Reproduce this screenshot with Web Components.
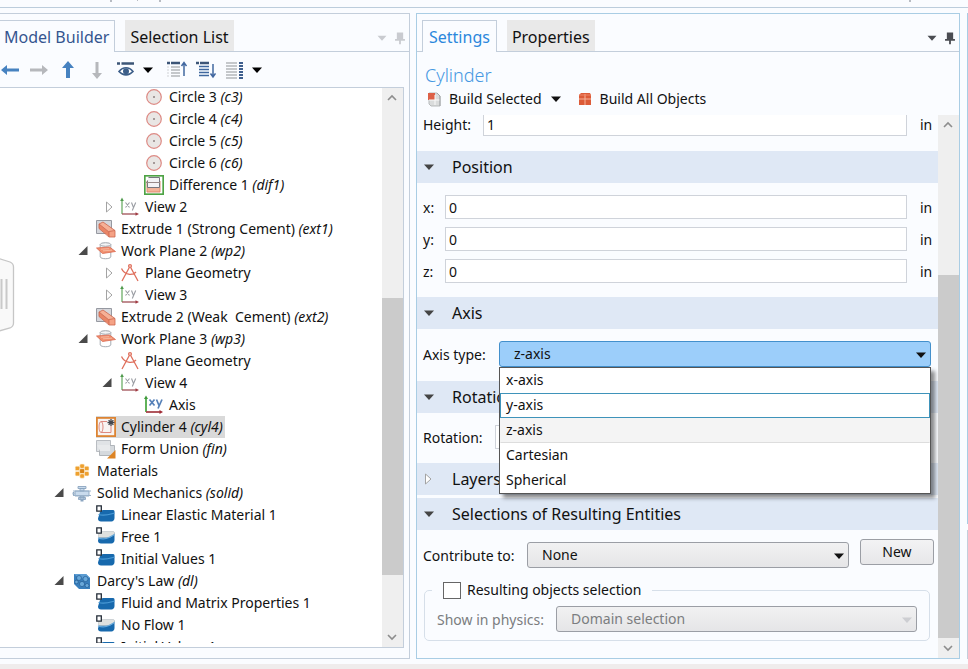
<!DOCTYPE html>
<html lang="en">
<head>
<meta charset="utf-8">
<title>Model Builder</title>
<style>
    html, body {
        height: 100%;
        margin: 0;
    }
    body {
        overflow: hidden;
        background: #fafcff;
        color: #111;
        font: 14px/22px "Noto Sans", "Open Sans", sans-serif;
    }
</style>
</head>
<body>
<model-app></model-app>

<script>
const ICONS = {
    "circle": `<circle cx="10" cy="10" r="7.3" fill="#e9e6e4" stroke="#dd8a84" stroke-width="1.2"/><circle cx="10" cy="10" r="1" fill="#8c8080"/>`,
    "difference": `<rect x=".8" y=".8" width="18.4" height="18.4" fill="#fff" stroke="#4ea345" stroke-width="1.7"/><path d="M3 7h13v10H3z" fill="#f3b49a"/><path d="M3 6h13v11H3z" fill="none" stroke="#e08a70"/><path d="M4.500 2.500h11v10H3.500v-7" fill="#f4f3f6" stroke="#77777f"/><path d="M2 7.500h14" stroke="#998a8a"/>`,
    "view": `<path d="M2 17V3" stroke="#6cae68" stroke-width="1.300"/><path d="M2 .5L3.800 4H.2z" fill="#4f9a4c"/><path d="M2 17h14" stroke="#a04f55" stroke-width="1.300"/><path d="M19 17l-3.500-1.800v3.600z" fill="#a03a42"/><path d="M5.500 5.500l4 5M9.500 5.500l-4 5M11.500 5.500l2 5M15.700 5.500l-3.400 8" stroke="#9a9da3" fill="none" stroke-width="1.100"/>`,
    "axis": `<path d="M2 17V3" stroke="#4faa48" stroke-width="1.800"/><path d="M2 .5L4 4H0z" fill="#3f9a3c"/><path d="M2 17h14" stroke="#a8434b" stroke-width="1.800"/><path d="M19 17l-3.500-2v4z" fill="#a02a35"/><path d="M5.500 4.500l5 6M10.500 4.500l-5 6M12.500 4.500l2.500 6M18 4.500l-4 9" stroke="#5681b8" fill="none" stroke-width="1.700"/>`,
    "extrude": `<path d="M.5 1.500h15v13H.5z" fill="#d5d6db" stroke="#9699a1"/><path d="M3 5l4-2 12 8.500-6 1.500z" fill="#f6b096"/><path d="M3 5l10 8v4.500L3 9.500z" fill="#e98566"/><path d="M13 12h6v6h-6z" fill="#f5a285"/><path d="M3 5l4-2 12 8.500V18h-6L3 9.500zM3 5l10 8v5M13 12.500l6-1" fill="none" stroke="#cc654d" stroke-width=".8"/>`,
    "plane": `<ellipse cx="9.500" cy="3.500" rx="5.300" ry="1.800" fill="#f3f4f6" stroke="#9fa5ac"/><path d="M4.200 3.500v12.500M14.800 3.500v12.500M4.200 16c1 2.300 9.600 2.300 10.600 0" fill="none" stroke="#a5abb2"/><path d="M.5 7l13-1 6 4.500-13 2z" fill="#f0906f" stroke="#d96850" stroke-width=".8"/><path d="M5 8.200l8-.5M7 9.800l9-.6" stroke="#f9c7b2" stroke-width=".7"/>`,
    "compass": `<g fill="none" stroke="#df6f5c" stroke-width="1.300"><circle cx="10" cy="3" r="1.400"/><path d="M9.300 4.500L2 18M10.700 4.500L18 18M1.500 5.500c3 6.500 11 7.500 14.500 3.500"/></g>`,
    "cylinder": `<rect x=".9" y=".9" width="18.200" height="18.200" fill="#f8f4f2" stroke="#dc8433" stroke-width="1.800"/><g fill="none" stroke="#dd8a80" stroke-width="1"><ellipse cx="5" cy="10" rx="2" ry="5.500"/><path d="M5 4.500h6M5 15.500h10V9"/></g><path d="M15 2v7M11.500 5.500h7M12.600 3.100l4.800 4.800M17.400 3.100l-4.800 4.800" stroke="#43464d" stroke-width="1.300"/>`,
    "union": `<path d="M.5 1.500h14v11H.5z" fill="#e0e3e6" stroke="#b9bdc2"/><path d="M3.500 6.500h15v10h-15z" fill="#d5d9dd" stroke="#b0b5ba"/><path d="M1 6h13v6H4z" fill="#e8eaec"/><path d="M19.500 11v8.500H11z" fill="#dd8424"/>`,
    "materials": `<g fill="#eea02e" stroke="#fdf3df" stroke-width=".6"><rect x="7.800" y="3" width="4.600" height="4.400" rx="1.200"/><rect x="7.800" y="12.800" width="4.600" height="4.400" rx="1.200"/><rect x="3.200" y="5.200" width="4.600" height="4.400" rx="1.200"/><rect x="12.400" y="5.200" width="4.600" height="4.400" rx="1.200"/><rect x="3.200" y="10.500" width="4.600" height="4.400" rx="1.200"/><rect x="12.400" y="10.500" width="4.600" height="4.400" rx="1.200"/><rect x="7.600" y="7.700" width="5" height="4.800" rx="1.200" fill="#d98517"/></g>`,
    "solid": `<g fill="#c9dbed" stroke="#8ba5c0" stroke-width=".9"><path d="M6 3.500h8v2H6zM8 5.500h4v2.500H8zM3 8h14v5H3zM2 9.500H1v2h1zM8 13h4v3H8zM6.500 14.500h7v2h-7z"/></g><path d="M1 8h18M1 12.500h18" stroke="#9bb3cb"/><path d="M8.500 17h3v1.500h-3z" fill="#8ba5c0"/>`,
    "darcy": `<path d="M2 3h12l4 4v11H7l-5-5z" fill="#397fbd"/><path d="M2 3h12l4 4-11 .5z" fill="#5d9dd2"/><g fill="#69a8d9" stroke="#235c93" stroke-width=".7"><circle cx="7" cy="7" r="2.500"/><circle cx="13.500" cy="8" r="2.600"/><circle cx="10" cy="13" r="2.600"/><circle cx="15" cy="14.500" r="2"/><circle cx="4.500" cy="11" r="1.800"/></g>`,
    "domain": `<path d="M4 7c1-2 3-2 5-2h8c1.500 0 1.500 1 1.500 2v6c0 2-1.500 3.500-3 3.500H5c-2 0-3-1-3-3z" fill="#1769ad"/><path d="M2.500 9.500c6 2 11 0 16-1.500" fill="none" stroke="#4b9bd6" stroke-width="1.200"/><path d="M.8.8h4.500v5.400H.8z" fill="#fff" stroke="#222b36" stroke-width="1.300"/>`,
    "boundary": `<path d="M4 7c1-2 3-2 5-2h8c1.500 0 1.500 1 1.500 2v6c0 2-1.500 3.500-3 3.500H5c-2 0-3-1-3-3z" fill="#1769ad"/><path d="M2.500 7c1-2 3-2.500 5-2.500h9.500c1.500 0 1.500 1 1.500 2.500-2 2-4 3.500-6.500 3.500H2.500z" fill="#dfe1df" stroke="#b7bfc4" stroke-width=".6"/><path d="M2 11c5 1.500 8 1 11-.5l5.500-3" fill="none" stroke="#63a8dc" stroke-width="1.200"/><path d="M.8.8h4.500v5.400H.8z" fill="#fff" stroke="#222b36" stroke-width="1.300"/>`,
    "left": `<path d="M1 10l6-5v3.600h12v2.800H7V15z" fill="#4682c0"/>`,
    "right": `<path d="M19 10l-6-5v3.600H1v2.800h12V15z" fill="#b6b8bc"/>`,
    "up": `<path d="M10 1l6 7h-4v10H8V8H4z" fill="#4682c0"/>`,
    "down": `<path d="M10 19l5-6h-3.500V2h-3v11H5z" fill="#b6b8bc"/>`,
    "show": `<path d="M1 3.500h3M5.500 3.500H18" stroke="#3c5577" stroke-width="2.400"/><path d="M3 11.500c4-5 10-5 14 0-4 4.500-10 4.500-14 0z" fill="#fff" stroke="#3c5e89" stroke-width="1.600"/><circle cx="10" cy="11.200" r="3" fill="#3c5e89"/>`,
    "collapse": `<path d="M0 3h3M4 3h9" stroke="#3c5577" stroke-width="2.400"/><path d="M4 7h9M4 10h9M4 13h9M4 16h9" stroke="#b4b7bb" stroke-width="1.400"/><path d="M0 7h2M0 10h2M0 13h2M0 16h2" stroke="#d0d2d5"/><path d="M17 16V3M14.500 6L17 2.500 19.500 6" fill="none" stroke="#4268a0" stroke-width="1.500"/>`,
    "expand": `<path d="M0 3h3M4 3h9" stroke="#3c5577" stroke-width="2.400"/><path d="M3 6.500h10M3 9.500h10M3 12.500h10M3 15.500h10" stroke="#3f679e" stroke-width="1.600"/><path d="M17 4v13M14.500 13.500L17 17l2.500-3.500" fill="none" stroke="#4268a0" stroke-width="1.500"/>`,
    "columns": `<path d="M1 3h11M1 6h11M1 9h11M1 12h11M1 15h11M1 18h11" stroke="#b4b7bb" stroke-width="1.400"/><path d="M14 3h4M14 6h4M14 9h4M14 12h4M14 15h4M14 18h4" stroke="#3f5f8e" stroke-width="1.900"/>`,
    "build": `<path d="M5 4h8l3 3v10H7l-2-2z" fill="#dadcdc" stroke="#b7babb"/><path d="M4 4h7v7H4z" fill="#dd6047"/><path d="M11 6v10M5 11h11" stroke="#fafafa"/><path d="M13 4l3 3v10" fill="none" stroke="#a2a5a8"/>`,
    "build-all": `<path d="M4 6l2-2h9l1 2v10H4z" fill="#dc5b38"/><path d="M10 5v11M4 10h12" stroke="#f6b39a"/><path d="M4 6h12" stroke="#ee8769"/>`,
    "menu": `<path d="M5 7.500h10l-5 5.500z" fill="currentColor"/>`,
    "pin": `<path d="M6.500 4h7v7h2v2h-4.500v4h-2v-4H4.500v-2h2z" fill="currentColor"/>`,
    "open": `<path d="M11.500 5v9H2.500z" fill="#4a4a4a"/>`,
    "closed": `<path d="M6.500 5l5.500 5-5.500 5z" fill="#fff" stroke="#a3a3a3"/>`,
    "chevron-up": `<path d="M6 12l4-4 4 4" fill="none" stroke="#8d8d8d" stroke-width="1.600"/>`,
    "chevron-down": `<path d="M6 8l4 4 4-4" fill="none" stroke="#8d8d8d" stroke-width="1.600"/>`
};

class UiIcon extends HTMLElement {

    constructor() {
        super();
        this.attachShadow({ mode: "open" });
    }

    connectedCallback() {
        this.shadowRoot.innerHTML = `
        <style>
            :host {
                display: block;
                flex: none;
                width: 20px;
                height: 20px;
                white-space: normal;
            }
            svg {
                display: block;
                width: 100%;
                height: 100%;
            }
        </style>
        <svg viewBox="0 0 20 20" aria-hidden="true">${ICONS[this.getAttribute("name")] || ""}</svg>
      `;
    }
}

class ScrollRail extends HTMLElement {

    constructor() {
        super();
        this.attachShadow({ mode: "open" });
    }

    connectedCallback() {
        // before / size / after are the proportions of the track
        const before = this.getAttribute("before");
        const size = this.getAttribute("size");
        const after = this.getAttribute("after");
        this.shadowRoot.innerHTML = `
        <style>
            :host {
                display: flex;
                flex-direction: column;
                flex: none;
                width: 21px;
                background: #efefef;
            }
            button {
                padding: 0;
                border: 0;
                background: none;
                height: 20px;
            }
            .thumb {
                background: #cbcbcb;
            }
        </style>
        <button aria-label="Scroll up"><ui-icon name="chevron-up"></ui-icon></button>
        <div style="flex: ${before}"></div>
        <div class="thumb" style="flex: ${size}"></div>
        <div style="flex: ${after}"></div>
        <button aria-label="Scroll down"><ui-icon name="chevron-down"></ui-icon></button>
      `;
    }
}

class PanelTabs extends HTMLElement {

    constructor() {
        super();
        this.attachShadow({ mode: "open" });
    }

    connectedCallback() {
        const [first, second] = this.getAttribute("tabs").split("|");
        this.shadowRoot.innerHTML = `
        <style>
            :host {
                display: flex;
                flex: none;
                height: 31px;
                padding: 6px 0 0 5px;
                border-bottom: 1px solid #c3cedb;
            }
            :host([flush]) {
                padding-left: 0;
            }
            button {
                font: inherit;
                font-size: 16px;
                line-height: 24px;
                border: 0;
                padding: 2px 5px 0;
                height: 31px;
                color: #111;
                background: #e9e9e9;
            }
            .active {
                height: 32px;
                padding: 1px 6px 0;
                margin-right: 10px;
                border: 1px solid #c3cedb;
                border-bottom: 0;
                background: #fafcff;
                color: var(--tab-color);
            }
            :host([flush]) .active {
                border-left: 0;
                padding: 1px 5px 0 4px;
            }
            .tools {
                display: flex;
                margin-left: auto;
                padding-top: 5px;
                align-items: center;
                color: var(--tool-color);
            }
            .tools button {
                display: block;
                background: none;
                color: inherit;
                padding: 0;
                height: 20px;
                width: 18px;
            }
            ui-icon {
                width: 18px;
                height: 18px;
            }
        </style>
        <button class="active">${first}</button>
        <button>${second}</button>
        <div class="tools">
            <button aria-label="Panel menu"><ui-icon name="menu"></ui-icon></button>
            <button aria-label="Pin panel"><ui-icon name="pin"></ui-icon></button>
        </div>
      `;
    }
}

class TreeNode extends HTMLElement {

    constructor() {
        super();
        this.attachShadow({ mode: "open" });
    }

    connectedCallback() {
        const level = Number(this.getAttribute("level"));
        const tag = this.getAttribute("tag");
        this.shadowRoot.innerHTML = `
        <style>
            :host {
                display: flex;
                align-items: center;
                height: 22px;
                white-space: pre;
                padding-left: ${28 + level * 24}px;
            }
            .toggle {
                width: 20px;
            }
            .item {
                display: flex;
                align-items: center;
                gap: 5px;
                padding-right: 2px;
            }
            :host([selected]) .item {
                background: #d9d9d9;
            }
        </style>
        <div class="toggle">${this.hasAttribute("toggle") ? `<ui-icon name="${this.getAttribute("toggle")}"></ui-icon>` : ""}</div>
        <div class="item">
            <ui-icon name="${this.getAttribute("icon")}"></ui-icon>
            <span><slot></slot>${tag ? ` <i>(${tag})</i>` : ""}</span>
        </div>
      `;
    }
}

class ModelTree extends HTMLElement {

    constructor() {
        super();
        this.attachShadow({ mode: "open" });
    }

    connectedCallback() {
        this.shadowRoot.innerHTML = `
        <style>
            :host {
                display: flex;
                flex: 1;
                min-height: 0;
                margin: 0 5px 10px 0;
                border: 1px solid #c3cedb;
                border-left: 0;
                background: #fff;
            }
            .view {
                flex: 1;
                overflow: hidden;
                margin-bottom: 4px;
            }
            .rows {
                margin-top: -2px;
            }
        </style>
        <div class="view">
            <div class="rows">
                <tree-node level="4" icon="circle" tag="c3">Circle 3</tree-node>
                <tree-node level="4" icon="circle" tag="c4">Circle 4</tree-node>
                <tree-node level="4" icon="circle" tag="c5">Circle 5</tree-node>
                <tree-node level="4" icon="circle" tag="c6">Circle 6</tree-node>
                <tree-node level="4" icon="difference" tag="dif1">Difference 1</tree-node>
                <tree-node level="3" icon="view" toggle="closed">View 2</tree-node>
                <tree-node level="2" icon="extrude" tag="ext1">Extrude 1 (Strong Cement)</tree-node>
                <tree-node level="2" icon="plane" toggle="open" tag="wp2">Work Plane 2</tree-node>
                <tree-node level="3" icon="compass" toggle="closed">Plane Geometry</tree-node>
                <tree-node level="3" icon="view" toggle="closed">View 3</tree-node>
                <tree-node level="2" icon="extrude" tag="ext2">Extrude 2 (Weak  Cement)</tree-node>
                <tree-node level="2" icon="plane" toggle="open" tag="wp3">Work Plane 3</tree-node>
                <tree-node level="3" icon="compass">Plane Geometry</tree-node>
                <tree-node level="3" icon="view" toggle="open">View 4</tree-node>
                <tree-node level="4" icon="axis">Axis</tree-node>
                <tree-node level="2" icon="cylinder" tag="cyl4" selected>Cylinder 4</tree-node>
                <tree-node level="2" icon="union" tag="fin">Form Union</tree-node>
                <tree-node level="1" icon="materials">Materials</tree-node>
                <tree-node level="1" icon="solid" toggle="open" tag="solid">Solid Mechanics</tree-node>
                <tree-node level="2" icon="domain">Linear Elastic Material 1</tree-node>
                <tree-node level="2" icon="boundary">Free 1</tree-node>
                <tree-node level="2" icon="domain">Initial Values 1</tree-node>
                <tree-node level="1" icon="darcy" toggle="open" tag="dl">Darcy's Law</tree-node>
                <tree-node level="2" icon="domain">Fluid and Matrix Properties 1</tree-node>
                <tree-node level="2" icon="boundary">No Flow 1</tree-node>
                <tree-node level="2" icon="domain">Initial Values 1</tree-node>
            </div>
        </div>
        <scroll-rail before="190" size="276" after="52"></scroll-rail>
      `;
    }
}

class ModelPanel extends HTMLElement {

    constructor() {
        super();
        this.attachShadow({ mode: "open" });
    }

    connectedCallback() {
        this.shadowRoot.innerHTML = `
        <style>
            :host {
                display: flex;
                flex-direction: column;
                min-height: 0;
                min-width: 0;
                border: 1px solid #c3cedb;
                border-left: 0;
                --tab-color: #35558f;
                --tool-color: #c9cbd0;
            }
            .toolbar {
                display: flex;
                flex: none;
                height: 35px;
                align-items: center;
            }
            button {
                padding: 0;
                border: 0;
                background: none;
                margin-right: 9px;
            }
            .tight {
                margin-right: 2px;
            }
        </style>
        <panel-tabs flush tabs="Model Builder|Selection List"></panel-tabs>
        <div class="toolbar">
            <button aria-label="Previous"><ui-icon name="left"></ui-icon></button>
            <button aria-label="Next"><ui-icon name="right"></ui-icon></button>
            <button aria-label="Move up"><ui-icon name="up"></ui-icon></button>
            <button aria-label="Move down"><ui-icon name="down"></ui-icon></button>
            <button class="tight" aria-label="Show"><ui-icon name="show"></ui-icon></button>
            <button aria-label="Show options"><ui-icon name="menu"></ui-icon></button>
            <button aria-label="Collapse all"><ui-icon name="collapse"></ui-icon></button>
            <button aria-label="Expand all"><ui-icon name="expand"></ui-icon></button>
            <button class="tight" aria-label="Columns"><ui-icon name="columns"></ui-icon></button>
            <button aria-label="Column options"><ui-icon name="menu"></ui-icon></button>
        </div>
        <model-tree></model-tree>
      `;
    }
}

class SettingsSection extends HTMLElement {

    constructor() {
        super();
        this.attachShadow({ mode: "open" });
    }

    connectedCallback() {
        const collapsed = this.hasAttribute("collapsed");
        this.shadowRoot.innerHTML = `
        <style>
            :host {
                display: block;
            }
            :host([collapsed]) {
                margin-bottom: 3px;
            }
            button {
                display: flex;
                align-items: center;
                gap: 13px;
                width: 100%;
                height: 32px;
                padding: 0 2px;
                border: 0;
                background: #dfe8f5;
                color: #111;
                font: inherit;
                font-size: 16px;
                text-align: left;
            }
            ui-icon {
                color: #444;
            }
            .body {
                display: flex;
                flex-direction: column;
                gap: 8px;
                padding: 12px 0 14px;
            }
            :host([collapsed]) .body {
                display: none;
            }
        </style>
        <button aria-expanded="${!collapsed}">
            <ui-icon name="${collapsed ? "closed" : "menu"}"></ui-icon>${this.getAttribute("heading")}
        </button>
        <div class="body"><slot></slot></div>
      `;
    }
}

class TextField extends HTMLElement {

    constructor() {
        super();
        this.attachShadow({ mode: "open" });
    }

    connectedCallback() {
        this.shadowRoot.innerHTML = `
        <style>
            :host {
                display: flex;
                align-items: center;
                padding-left: 6px;
            }
            label {
                flex: none;
                width: var(--label, 22px);
                padding-top: 2px;
            }
            input {
                flex: 1;
                min-width: 0;
                height: 24px;
                box-sizing: border-box;
                border: 1px solid #cfd3da;
                padding: 0 3px;
                background: #fff;
                color: #111;
                font: inherit;
            }
            span {
                width: 18px;
                padding: 2px 0 0 13px;
            }
        </style>
        <label for="field">${this.getAttribute("label")}</label>
        <input id="field" value="${this.getAttribute("value")}">
        <span>${this.getAttribute("unit")}</span>
      `;
    }
}

class ComboBox extends HTMLElement {

    constructor() {
        super();
        this.attachShadow({ mode: "open" });
    }

    connectedCallback() {
        const options = this.getAttribute("options").split("|");
        const value = this.getAttribute("value");
        const active = this.getAttribute("active");
        this.shadowRoot.innerHTML = `
        <style>
            :host {
                display: flex;
                flex: 1;
                align-items: center;
            }
            :host([disabled]) {
                color: #7b7d80;
            }
            label {
                flex: none;
                width: var(--label);
                padding-top: 2px;
            }
            .box {
                position: relative;
                flex: 1;
                color: #111;
            }
            select {
                display: block;
                appearance: none;
                width: 100%;
                height: 26px;
                padding: 0 14px;
                border: 1px solid #9b9ea5;
                border-radius: 3px;
                background: linear-gradient(#f1f1f2, #e5e5e7);
                color: #111;
                font: inherit;
                opacity: 1;
            }
            :host([open]) select {
                border-color: #4390cc;
                background: #9ccefa;
            }
            :host([disabled]) select {
                color: #7b7d80;
            }
            .arrow {
                position: absolute;
                top: 4px;
                right: 0;
                pointer-events: none;
            }
            :host([disabled]) .arrow {
                color: #cdced2;
            }
            ul {
                position: absolute;
                z-index: 1;
                top: 100%;
                left: 0;
                right: 0;
                margin: 0;
                padding: 0;
                border: 1px solid #555;
                background: #fff;
                box-shadow: 4px 4px 4px rgba(0, 0, 0, 0.45);
                list-style: none;
            }
            li {
                height: 25px;
                box-sizing: border-box;
                padding: 0 5px;
                border: 1px solid transparent;
            }
            .active {
                border-color: #3f93ba;
            }
            .current {
                background: #f4f4f4;
                border-bottom-color: #ddd;
            }
        </style>
        <label for="select">${this.getAttribute("label")}</label>
        <div class="box">
            <select id="select" ${this.hasAttribute("disabled") ? "disabled" : ""}>
                ${options.map(o => `<option ${o === value ? "selected" : ""}>${o}</option>`).join("")}
            </select>
            <ui-icon class="arrow" name="menu"></ui-icon>
            ${this.hasAttribute("open") ? `<ul role="listbox">
                ${options.map(o => `<li role="option" class="${o === active ? "active" : o === value ? "current" : ""}">${o}</li>`).join("")}
            </ul>` : ""}
        </div>
      `;
    }
}

class SelectionGroup extends HTMLElement {

    constructor() {
        super();
        this.attachShadow({ mode: "open" });
    }

    connectedCallback() {
        this.shadowRoot.innerHTML = `
        <style>
            :host {
                display: block;
                padding: 0 8px 0 7px;
            }
            fieldset {
                margin: 0;
                padding: 5px 12px 8px;
                border: 1px solid #d6dfe9;
                border-radius: 5px;
                --label: 119px;
            }
            legend {
                margin-left: -5px;
                padding: 0 11px;
            }
            label {
                display: flex;
                align-items: center;
                gap: 6px;
            }
            input {
                appearance: none;
                width: 18px;
                height: 17px;
                margin: 0;
                border: 1px solid #666;
                background: #fff;
            }
        </style>
        <fieldset>
            <legend><label><input type="checkbox">Resulting objects selection</label></legend>
            <combo-box disabled label="Show in physics:" options="Domain selection" value="Domain selection"></combo-box>
        </fieldset>
      `;
    }
}

class SettingsPanel extends HTMLElement {

    constructor() {
        super();
        this.attachShadow({ mode: "open" });
    }

    connectedCallback() {
        this.shadowRoot.innerHTML = `
        <style>
            :host {
                display: flex;
                flex-direction: column;
                min-height: 0;
                min-width: 0;
                border: 1px solid #a9cde4;
                --tab-color: #2b87dc;
                --tool-color: #4a4c52;
            }
            h1 {
                flex: none;
                margin: 10px 8px 0;
                color: #4698e2;
                font-size: 18px;
                font-weight: 300;
                line-height: 26px;
            }
            .actions {
                display: flex;
                flex: none;
                height: 22px;
                align-items: center;
                padding: 0 0 5px 7px;
            }
            .actions button {
                display: flex;
                align-items: center;
                gap: 5px;
                padding: 0;
                border: 0;
                background: none;
                color: #111;
                font: inherit;
            }
            .actions .menu {
                margin: 0 9px 0 4px;
            }
            .scroller {
                display: flex;
                flex: 1;
                min-height: 0;
            }
            .view {
                flex: 1;
                min-width: 0;
                overflow: hidden;
            }
            .top {
                --label: 60px;
                margin: -3px 0 15px;
            }
            .axis {
                --label: 76px;
                padding: 0 7px 0 6px;
            }
            .rotation {
                --label: 72px;
            }
            .contribute {
                display: flex;
                align-items: center;
                gap: 11px;
                margin-top: -3px;
                padding: 0 4px 0 6px;
                --label: 104px;
            }
            .contribute button {
                width: 74px;
                height: 26px;
                margin-bottom: 6px;
                padding: 0;
                border: 1px solid #9b9ea5;
                border-radius: 3px;
                background: linear-gradient(#f3f3f4, #e7e7e9);
                color: #111;
                font: inherit;
            }
        </style>
        <panel-tabs tabs="Settings|Properties"></panel-tabs>
        <h1>Cylinder</h1>
        <div class="actions">
            <button><ui-icon name="build"></ui-icon>Build Selected</button>
            <button class="menu" aria-label="Build options"><ui-icon name="menu"></ui-icon></button>
            <button><ui-icon name="build-all"></ui-icon>Build All Objects</button>
        </div>
        <div class="scroller">
            <div class="view">
                <text-field class="top" label="Height:" value="1" unit="in"></text-field>
                <settings-section heading="Position">
                    <text-field label="x:" value="0" unit="in"></text-field>
                    <text-field label="y:" value="0" unit="in"></text-field>
                    <text-field label="z:" value="0" unit="in"></text-field>
                </settings-section>
                <settings-section heading="Axis">
                    <combo-box class="axis" open label="Axis type:" options="x-axis|y-axis|z-axis|Cartesian|Spherical" value="z-axis" active="y-axis"></combo-box>
                </settings-section>
                <settings-section heading="Rotation Angle">
                    <text-field class="rotation" label="Rotation:" value="0" unit=""></text-field>
                </settings-section>
                <settings-section heading="Layers" collapsed></settings-section>
                <settings-section heading="Selections of Resulting Entities">
                    <div class="contribute">
                        <combo-box label="Contribute to:" options="None" value="None"></combo-box>
                        <button>New</button>
                    </div>
                    <selection-group></selection-group>
                </settings-section>
            </div>
            <scroll-rail before="140" size="362" after="0"></scroll-rail>
        </div>
      `;
    }
}

class ModelApp extends HTMLElement {

    constructor() {
        super();
        this.attachShadow({ mode: "open" });
    }

    connectedCallback() {
        this.shadowRoot.innerHTML = `
        <style>
            :host {
                display: flex;
                flex-direction: column;
                height: 100%;
            }
            .ribbon {
                display: flex;
                flex: none;
                height: 7px;
                border-bottom: 1px solid #bccddc;
            }
            .ribbon svg {
                width: 100%;
                height: 4px;
            }
            main {
                display: grid;
                grid-template-columns: 410fr 544fr 2px;
                gap: 6px;
                flex: 1;
                min-height: 0;
                padding: 5px 0;
            }
            aside {
                display: flex;
                flex-direction: column;
                gap: 6px;
                padding-left: 1px;
            }
            aside div {
                flex: 128;
                border: 1px solid #c3cedb;
                border-right: 0;
            }
            aside div:first-child {
                flex: 512;
                border-color: #a9cde4;
            }
            footer {
                flex: none;
                height: 5px;
                background: #efecec;
            }
            .handle {
                position: absolute;
                left: 0;
                top: 257px;
                width: 15px;
                height: 76px;
            }
        </style>
        <div class="ribbon">
            <svg aria-hidden="true"><path d="M110 0h2v2h-2zM137 0h1v1h-1zM159 0h2v2h-2zM909 0h2v2h-2z" fill="#b8bcc3"/></svg>
        </div>
        <main>
            <model-panel></model-panel>
            <settings-panel></settings-panel>
            <aside><div></div><div></div></aside>
        </main>
        <footer></footer>
        <svg class="handle" viewBox="0 0 15 76" aria-hidden="true">
            <path d="M-1 1.500L10 5q3.500 1.500 3.500 5v56q0 3.500-3.500 5L-1 74z" fill="#f9f9f9" stroke="#c6c6c6" stroke-width="1.300"/>
            <path d="M1.500 22v30M6.500 22v30" stroke="#c9c9c9" stroke-width="2"/>
        </svg>
      `;
    }
}

customElements.define("ui-icon", UiIcon);
customElements.define("scroll-rail", ScrollRail);
customElements.define("panel-tabs", PanelTabs);
customElements.define("tree-node", TreeNode);
customElements.define("model-tree", ModelTree);
customElements.define("model-panel", ModelPanel);
customElements.define("text-field", TextField);
customElements.define("combo-box", ComboBox);
customElements.define("settings-section", SettingsSection);
customElements.define("selection-group", SelectionGroup);
customElements.define("settings-panel", SettingsPanel);
customElements.define("model-app", ModelApp);
</script>
</body>
</html>
